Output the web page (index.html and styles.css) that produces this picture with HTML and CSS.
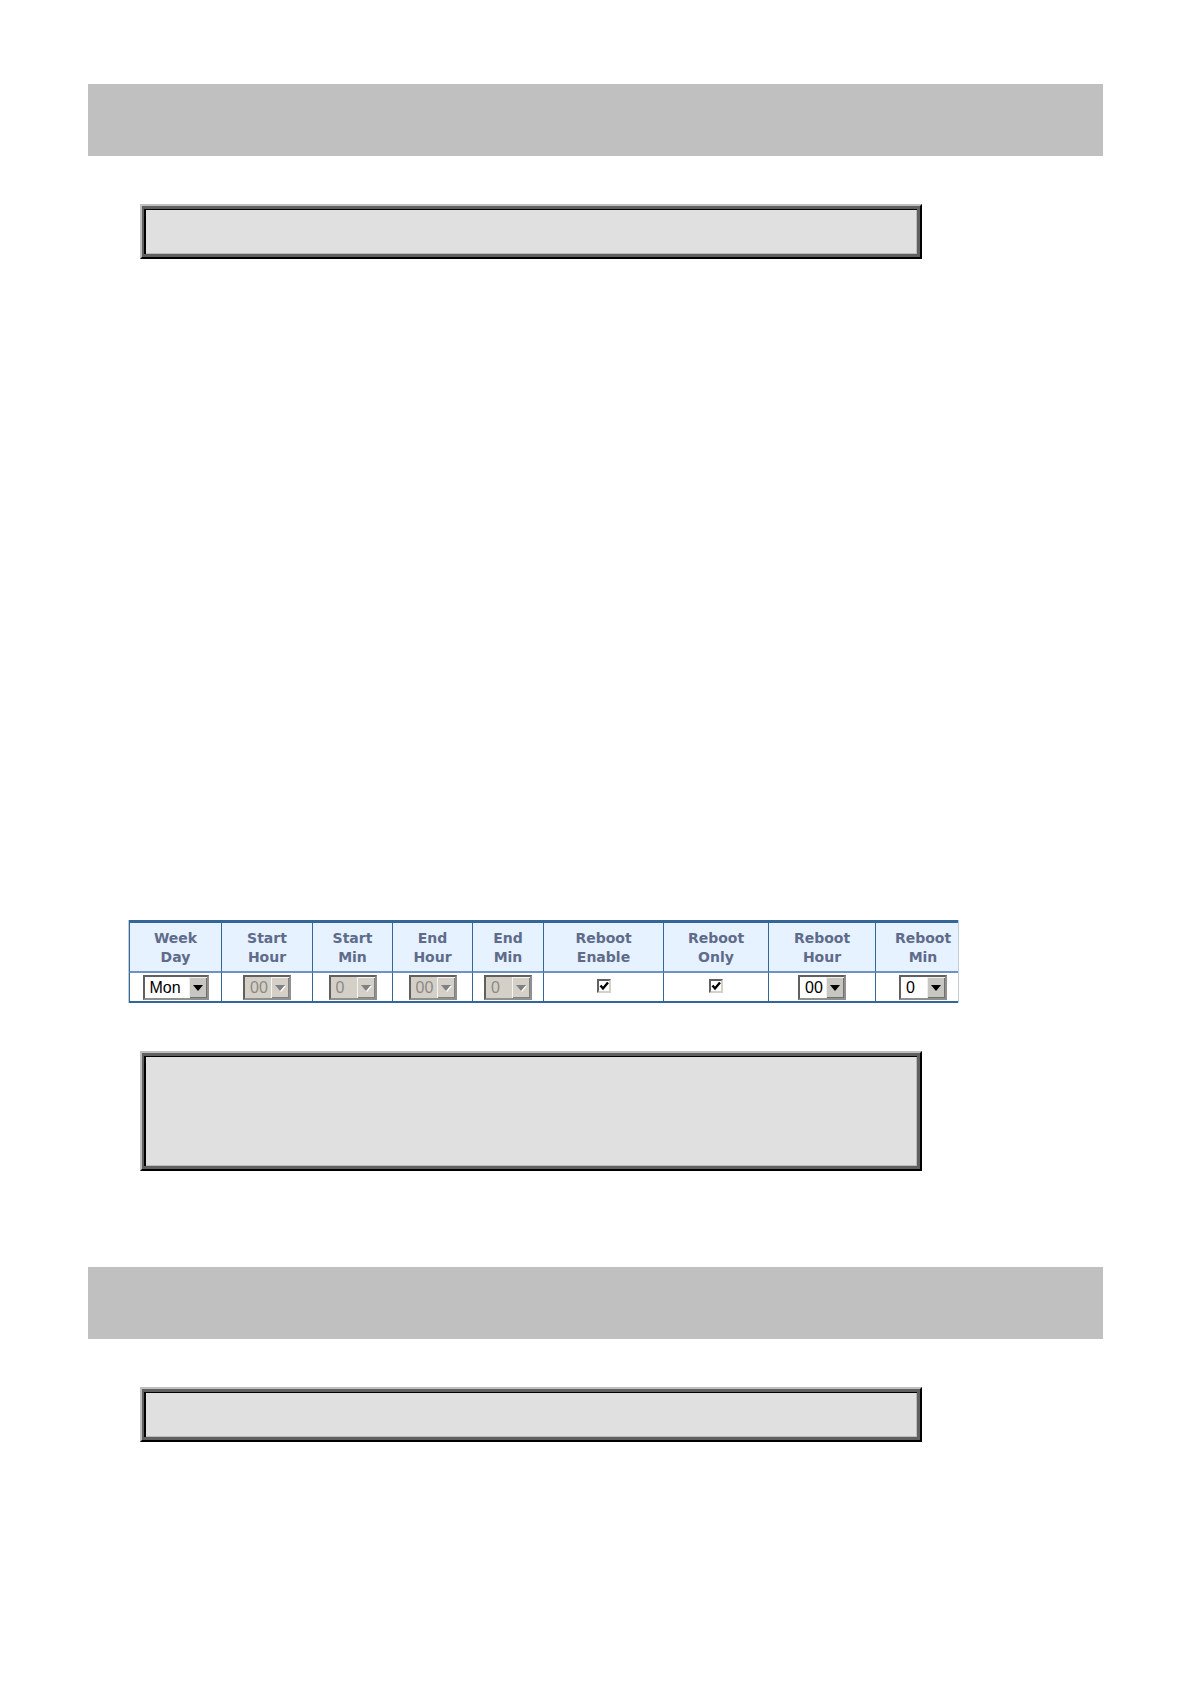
FILE: index.html
```
<!DOCTYPE html>
<html lang="en">
<head>
  <meta charset="UTF-8" />
  <meta name="viewport" content="width=device-width, initial-scale=1" />
  <title>Reboot Schedule</title>
  <link rel="stylesheet" href="styles.css">
</head>
<body>
  <main class="page">
    <section class="section">
      <div class="band"></div>
      <div class="panel"></div>

      <div class="schedule-wrapper">
        <table class="schedule">
          <colgroup>
            <col class="col-day">
            <col class="col-start-hour">
            <col class="col-hour">
            <col class="col-hour">
            <col class="col-end-min">
            <col class="col-enable">
            <col class="col-only">
            <col class="col-reboot-hour">
            <col class="col-reboot-min">
          </colgroup>
          <thead>
            <tr>
              <th id="week-day" scope="col">Week<br>Day</th>
              <th id="start-hour" scope="col">Start<br>Hour</th>
              <th id="start-min" scope="col">Start<br>Min</th>
              <th id="end-hour" scope="col">End<br>Hour</th>
              <th id="end-min" scope="col">End<br>Min</th>
              <th id="reboot-enable" scope="col">Reboot<br>Enable</th>
              <th id="reboot-only" scope="col">Reboot<br>Only</th>
              <th id="reboot-hour" scope="col">Reboot<br>Hour</th>
              <th id="reboot-min" scope="col">Reboot<br>Min</th>
            </tr>
          </thead>
          <tbody>
            <tr>
              <td><select class="select select-day" aria-labelledby="week-day"><option>Mon</option></select></td>
              <td><select class="select" aria-labelledby="start-hour" disabled><option>00</option></select></td>
              <td><select class="select" aria-labelledby="start-min" disabled><option>0</option></select></td>
              <td><select class="select" aria-labelledby="end-hour" disabled><option>00</option></select></td>
              <td><select class="select" aria-labelledby="end-min" disabled><option>0</option></select></td>
              <td><input class="check" type="checkbox" aria-labelledby="reboot-enable" checked></td>
              <td><input class="check" type="checkbox" aria-labelledby="reboot-only" checked></td>
              <td><select class="select" aria-labelledby="reboot-hour"><option>00</option></select></td>
              <td><select class="select" aria-labelledby="reboot-min"><option>0</option></select></td>
            </tr>
          </tbody>
        </table>
      </div>

      <div class="panel panel-tall"></div>
    </section>

    <section class="section">
      <div class="band"></div>
      <div class="panel"></div>
    </section>
  </main>
</body>
</html>
```
FILE: styles.css
```
:root {
  --color-band: #c0c0c0;
  --color-panel: #e0e0e0;
  --color-panel-edge: #606060;
  --color-line: #336699;
  --color-line-light: #6f93bf;
  --color-head-bg: #e6f2ff;
  --color-head-text: #5f6b8a;
  --color-control: #d4d0c8;
}

*, *::before, *::after {
  box-sizing: border-box;
}

body {
  margin: 0;
  background: #ffffff;
  font-family: "Liberation Sans", Arial, sans-serif;
  font-size: 16px;
}

.page {
  min-height: 100vh;
  padding: 84px 88px;
  display: flex;
  flex-direction: column;
  gap: 96px;
}

.section {
  display: flex;
  flex-direction: column;
}

.band {
  height: 72px;
  margin-bottom: 48px;
  background: var(--color-band);
}

/* Double bevelled box */
.panel {
  min-height: 55px;
  margin: 0 181px 0 52px;
  border: 2px solid;
  border-color: #bfbfbf #000000 #000000 #bfbfbf;
  background: var(--color-panel);
  box-shadow:
    inset 2px 3px 0 0 var(--color-panel-edge),
    inset -3px -3px 0 0 var(--color-panel-edge),
    inset 4px 4px 0 0 #000000,
    inset -4px -4px 0 0 #bbbbbb;
}

.panel-tall {
  min-height: 120px;
}

/* Schedule table */
.schedule-wrapper {
  margin: 661px 144px 48px 40px;
  border-left: 1px solid #c4ccd6;
  border-right: 1px solid #c4ccd6;
}

.schedule {
  width: 100%;
  table-layout: fixed;
  border-collapse: separate;
  border-spacing: 0;
  border-top: 3px solid var(--color-line);
  border-bottom: 2px solid var(--color-line);
  text-align: center;
}

.col-day { width: 92px; }
.col-start-hour { width: 91px; }
.col-hour { width: 80px; }
.col-end-min { width: 71px; }
.col-enable { width: 120px; }
.col-only { width: 105px; }
.col-reboot-hour { width: 107px; }
.col-reboot-min { width: 83px; }

.schedule th {
  height: 50px;
  padding: 2px 0 0;
  border-left: 1px solid var(--color-line);
  border-bottom: 2px solid var(--color-line-light);
  background: var(--color-head-bg);
  color: var(--color-head-text);
  font-family: "DejaVu Sans", Verdana, sans-serif;
  font-size: 14px;
  font-weight: 700;
  line-height: 19px;
}

.schedule td {
  height: 28px;
  padding: 0;
  border-left: 1px solid var(--color-line);
  line-height: 0;
  vertical-align: middle;
}

.schedule th:last-child,
.schedule td:last-child {
  padding-left: 12px;
}

/* Drop-downs */
.select {
  appearance: none;
  width: 48px;
  height: 25px;
  margin: 0;
  padding: 0 20px 0 5px;
  border: 2px solid;
  border-color: #606060 #909090 #909090 #606060;
  border-radius: 0;
  background: #ffffff url("data:image/svg+xml,%3Csvg xmlns='http://www.w3.org/2000/svg' width='18' height='21'%3E%3Cpath fill='%23c8c6c0' d='M0 0h18v21H0z'/%3E%3Cpath fill='%23eeeeea' d='M0 0h18v1H1v20H0z'/%3E%3Cpath fill='%23707070' d='M17 1h1v20H1v-1h16z'/%3E%3Cpath d='M4 8h10l-5 6z'/%3E%3C/svg%3E") no-repeat right center;
  color: #000000;
  font-family: inherit;
  font-size: 16px;
  line-height: 21px;
}

.select:disabled {
  background-color: var(--color-control);
  background-image: url("data:image/svg+xml,%3Csvg xmlns='http://www.w3.org/2000/svg' width='18' height='21'%3E%3Cpath fill='%23d4d0c8' d='M0 0h18v21H0z'/%3E%3Cpath fill='%23f4f4f0' d='M0 0h18v1H1v20H0z'/%3E%3Cpath fill='%23808080' d='M17 1h1v20H1v-1h16z'/%3E%3Cpath fill='%23ffffff' d='M5 9h10l-5 6z'/%3E%3Cpath fill='%23808080' d='M4 8h10l-5 6z'/%3E%3C/svg%3E");
  color: #8c8a84;
  opacity: 1;
}

.select-day {
  width: 66px;
}

/* Check boxes */
.check {
  appearance: none;
  width: 14px;
  height: 14px;
  margin: 0 0 3px;
  border: 2px solid;
  border-color: #606060 #d4d0c8 #d4d0c8 #606060;
  background: #ffffff url("data:image/svg+xml,%3Csvg xmlns='http://www.w3.org/2000/svg' width='10' height='10'%3E%3Cpath fill='none' stroke='%23000' stroke-width='2.4' d='M1.5 4.5l2.5 3 5-6'/%3E%3C/svg%3E") no-repeat center;
  vertical-align: middle;
}
```
